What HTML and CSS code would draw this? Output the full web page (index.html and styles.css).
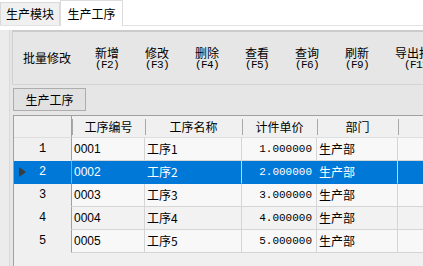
FILE: index.html
```html
<!DOCTYPE html>
<html lang="zh-CN">

<head>
    <meta charset="UTF-8">
    <title>生产工序</title>
    <link rel="stylesheet" href="styles.css">
</head>

<body>
    <div class="tabs">
        <div class="tab">生产模块</div>
        <div class="tab active">生产工序</div>
    </div>
    <div class="page">
        <div class="panel">
            <div class="toolbar">
                <div class="tool single">批量修改</div>
                <div class="tool"><span>新增</span><small>(F2)</small></div>
                <div class="tool"><span>修改</span><small>(F3)</small></div>
                <div class="tool"><span>删除</span><small>(F4)</small></div>
                <div class="tool"><span>查看</span><small>(F5)</small></div>
                <div class="tool"><span>查询</span><small>(F6)</small></div>
                <div class="tool"><span>刷新</span><small>(F9)</small></div>
                <div class="tool"><span>导出报表</span><small>(F11)</small></div>
            </div>
            <div class="group-bar">
                <button class="group-btn">生产工序</button>
            </div>
            <div class="grid">
                <div class="row head">
                    <div class="cell rowhead"></div>
                    <div class="cell">工序编号</div>
                    <div class="cell">工序名称</div>
                    <div class="cell">计件单价</div>
                    <div class="cell">部门</div>
                    <div class="cell">工</div>
                </div>
                <div class="row">
                    <div class="cell rowhead">1</div>
                    <div class="cell code">0001</div>
                    <div class="cell">工序1</div>
                    <div class="cell num">1.000000</div>
                    <div class="cell">生产部</div>
                    <div class="cell"></div>
                </div>
                <div class="row selected">
                    <div class="cell rowhead"><i class="arrow"></i>2</div>
                    <div class="cell code">0002</div>
                    <div class="cell">工序2</div>
                    <div class="cell num">2.000000</div>
                    <div class="cell">生产部</div>
                    <div class="cell"></div>
                </div>
                <div class="row">
                    <div class="cell rowhead">3</div>
                    <div class="cell code">0003</div>
                    <div class="cell">工序3</div>
                    <div class="cell num">3.000000</div>
                    <div class="cell">生产部</div>
                    <div class="cell"></div>
                </div>
                <div class="row alt">
                    <div class="cell rowhead">4</div>
                    <div class="cell code">0004</div>
                    <div class="cell">工序4</div>
                    <div class="cell num">4.000000</div>
                    <div class="cell">生产部</div>
                    <div class="cell"></div>
                </div>
                <div class="row">
                    <div class="cell rowhead">5</div>
                    <div class="cell code">0005</div>
                    <div class="cell">工序5</div>
                    <div class="cell num">5.000000</div>
                    <div class="cell">生产部</div>
                    <div class="cell"></div>
                </div>
            </div>
        </div>
    </div>
</body>

</html>
```

FILE: styles.css
```css
/* Reset */
body {
    margin: 0;
    padding: 0;
    width: 423px;
    height: 266px;
    overflow: hidden;
    background-color: #fff;
    font-family: "Noto Sans CJK SC", "Liberation Sans", sans-serif;
    font-size: 12px;
    color: #000;
}

/* Tab strip */
.tabs {
    display: flex;
    align-items: flex-end;
    height: 26px;
    border-bottom: 1px solid #e3e3e3;
    box-sizing: border-box;
}

.tab {
    height: 23px;
    width: 60px;
    line-height: 22px;
    text-align: center;
    background-color: #f0f0f0;
    border: 1px solid #d9d9d9;
    border-bottom: none;
    box-sizing: border-box;
}

.tab.active {
    height: 26px;
    width: 63px;
    line-height: 26px;
    background-color: #fff;
    margin-bottom: -1px;
    border-color: #dcdcdc;
}

/* Page below tabs */
.page {
    display: flex;
    height: 240px;
    padding-top: 4px;
    background-color: #fff;
}

.page::before {
    content: "";
    width: 9px;
    background-color: #ececec;
    border-right: 1px solid #dadada;
    flex: none;
}

.panel {
    flex: 1;
    display: flex;
    flex-direction: column;
    background-color: #e6e6e6;
    padding-left: 3px;
    min-width: 0;
}

/* Toolbar */
.toolbar {
    display: flex;
    align-items: center;
    height: 52px;
    margin-left: -1px;
    background-color: #e6e6e6;
    border-top: 2px solid #cbcbcb;
    border-left: 1px solid #cfcfcf;
    border-bottom: 1px solid #d4d4d4;
    white-space: nowrap;
    overflow: hidden;
}

.tool {
    display: flex;
    flex-direction: column;
    align-items: center;
    padding: 1px 13px 0;
}

.tool span {
    line-height: 14px;
}

.tool small {
    font-family: "Liberation Mono", monospace;
    font-size: 11px;
    letter-spacing: -0.6px;
    line-height: 11px;
}

.tool.single {
    padding: 0 11px 0 10px;
    line-height: 14px;
}

/* Group button */
.group-bar {
    padding: 3px 0 4px;
}

.group-btn {
    width: 73px;
    height: 23px;
    padding: 0;
    font-family: "Noto Sans CJK SC", sans-serif;
    font-size: 12px;
    background-color: #e1e1e1;
    border: 1px solid #adadad;
    color: #000;
}

/* Data grid */
.grid {
    flex: 1;
    background-color: #f0f0f0;
    border-top: 1px solid #a0a0a0;
    border-left: 1px solid #a0a0a0;
}

.row {
    display: grid;
    grid-template-columns: 58px 73px 97px 75px 81px 80px;
    height: 23px;
    background-color: #f8f8f8;
}

.row.alt {
    background-color: #f2f2f2;
}

.cell {
    line-height: 22px;
    padding: 0 2px;
    border-right: 1px solid #d5d5d5;
    border-bottom: 1px solid #d5d5d5;
    white-space: nowrap;
    overflow: hidden;
}

.head {
    height: 22px;
    background-color: #f0f0f0;
}

.head .cell {
    text-align: center;
    line-height: 21px;
    border-right: none;
    border-bottom: 1px solid #dedede;
    position: relative;
}

.head .cell + .cell::before {
    content: "";
    position: absolute;
    left: 0;
    top: 3px;
    bottom: 2px;
    width: 1px;
    background-color: #a8a8a8;
}

.rowhead {
    position: relative;
    text-align: center;
    font-family: "Liberation Mono", monospace;
    font-size: 12px;
    background-color: #f0f0f0;
    border-right: 1px solid #a0a0a0;
    border-bottom: 1px solid #f0f0f0;
}

.rowhead::after {
    content: "";
    position: absolute;
    left: 2px;
    right: 0;
    bottom: -1px;
    height: 1px;
    background-color: #a0a0a0;
}

.head .rowhead {
    border-right: 1px solid #a0a0a0;
}

.head .rowhead::after {
    display: none;
}

.code {
    font-family: "Liberation Sans", sans-serif;
}

.num {
    text-align: right;
    padding-right: 4px;
    font-family: "Liberation Mono", monospace;
    font-size: 11px;
}

.selected,
.selected .rowhead {
    background-color: #0078d7;
    color: #fff;
}

.selected .cell {
    border-right-color: #0078d7;
    border-bottom-color: #0078d7;
}

.selected .cell:nth-child(3),
.selected .cell:nth-child(5) {
    border-right-color: #bcd6ee;
}

.selected .rowhead {
    border-right-color: #a0a0a0;
}

.arrow {
    position: absolute;
    left: 5px;
    top: 6px;
    width: 0;
    height: 0;
    border-top: 5px solid transparent;
    border-bottom: 5px solid transparent;
    border-left: 7px solid #3c3c3c;
}
```
